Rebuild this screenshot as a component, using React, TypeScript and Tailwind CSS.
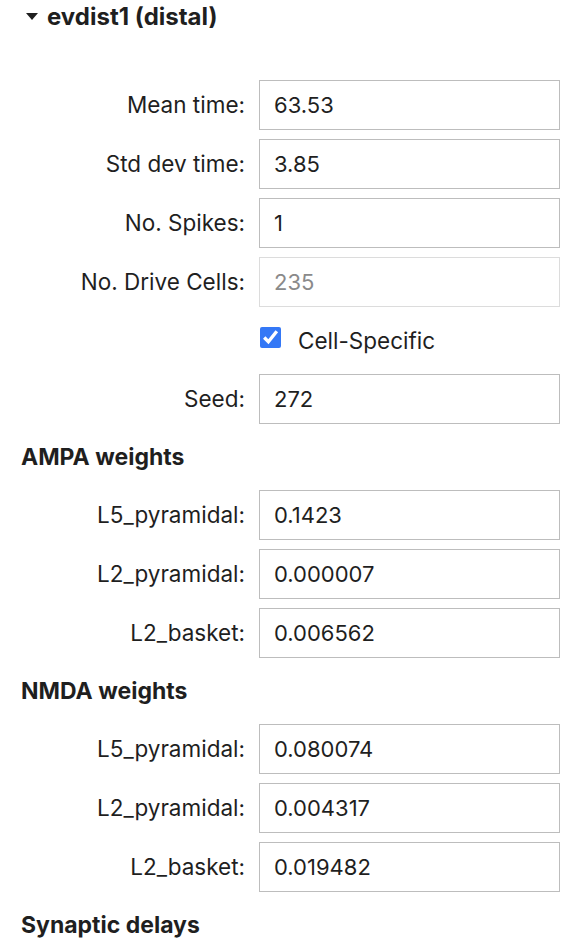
import React from "react";

type Field = { label: string; value: string; disabled?: boolean };

const drive: Field[] = [
  { label: "Mean time:", value: "63.53" },
  { label: "Std dev time:", value: "3.85" },
  { label: "No. Spikes:", value: "1" },
  { label: "No. Drive Cells:", value: "235", disabled: true },
];

const ampa: Field[] = [
  { label: "L5_pyramidal:", value: "0.1423" },
  { label: "L2_pyramidal:", value: "0.000007" },
  { label: "L2_basket:", value: "0.006562" },
];

const nmda: Field[] = [
  { label: "L5_pyramidal:", value: "0.080074" },
  { label: "L2_pyramidal:", value: "0.004317" },
  { label: "L2_basket:", value: "0.019482" },
];

function Row({ label, value, disabled }: Field) {
  return (
    <div className="flex items-center gap-[14px]">
      <label className="w-[245px] text-right text-[22.5px] text-[#1f1f1f]">
        {label}
      </label>
      <input
        defaultValue={value}
        disabled={disabled}
        className={
          disabled
            ? "h-[50px] w-[301px] border border-[#dcdcdc] bg-white px-[14px] text-[22px] text-[#8a8a8a] outline-none"
            : "h-[50px] w-[301px] border border-[#bdbdbd] bg-white px-[14px] text-[22px] text-[#1f1f1f] outline-none"
        }
      />
    </div>
  );
}

function Heading({ children }: { children: React.ReactNode }) {
  return (
    <h3 className="pl-[21px] py-[21px] text-[23px] leading-[24px] font-bold text-[#1f1f1f]">
      {children}
    </h3>
  );
}

export default function App() {
  return (
    <div
      className="min-h-screen w-[570px] bg-white text-[#1f1f1f]"
      style={{ fontFamily: "Inter, 'Noto Sans', sans-serif" }}
    >
      <div className="flex h-[34px] items-center pl-[26px]">
        <svg width="12" height="8" viewBox="0 0 12 8" className="mr-[9px]">
          <path d="M0 0 L12 0 L6 7 Z" fill="#1f1f1f" />
        </svg>
        <span className="text-[24px] font-bold">evdist1 (distal)</span>
      </div>

      <div className="mt-[46px] flex flex-col gap-[9px]">
        {drive.map((f) => (
          <Row key={f.label} {...f} />
        ))}
        <div className="flex h-[49px] items-center pl-[260px]">
          <input
            type="checkbox"
            defaultChecked
            className="mb-[6px] h-[21px] w-[21px] accent-[#3478f6]"
          />
          <span className="ml-[17px] text-[22.5px]">Cell-Specific</span>
        </div>
        <Row label="Seed:" value="272" />
      </div>

      <Heading>AMPA weights</Heading>
      <div className="flex flex-col gap-[9px]">
        {ampa.map((f) => (
          <Row key={f.label} {...f} />
        ))}
      </div>

      <Heading>NMDA weights</Heading>
      <div className="flex flex-col gap-[9px]">
        {nmda.map((f) => (
          <Row key={f.label} {...f} />
        ))}
      </div>

      <Heading>Synaptic delays</Heading>
    </div>
  );
}
